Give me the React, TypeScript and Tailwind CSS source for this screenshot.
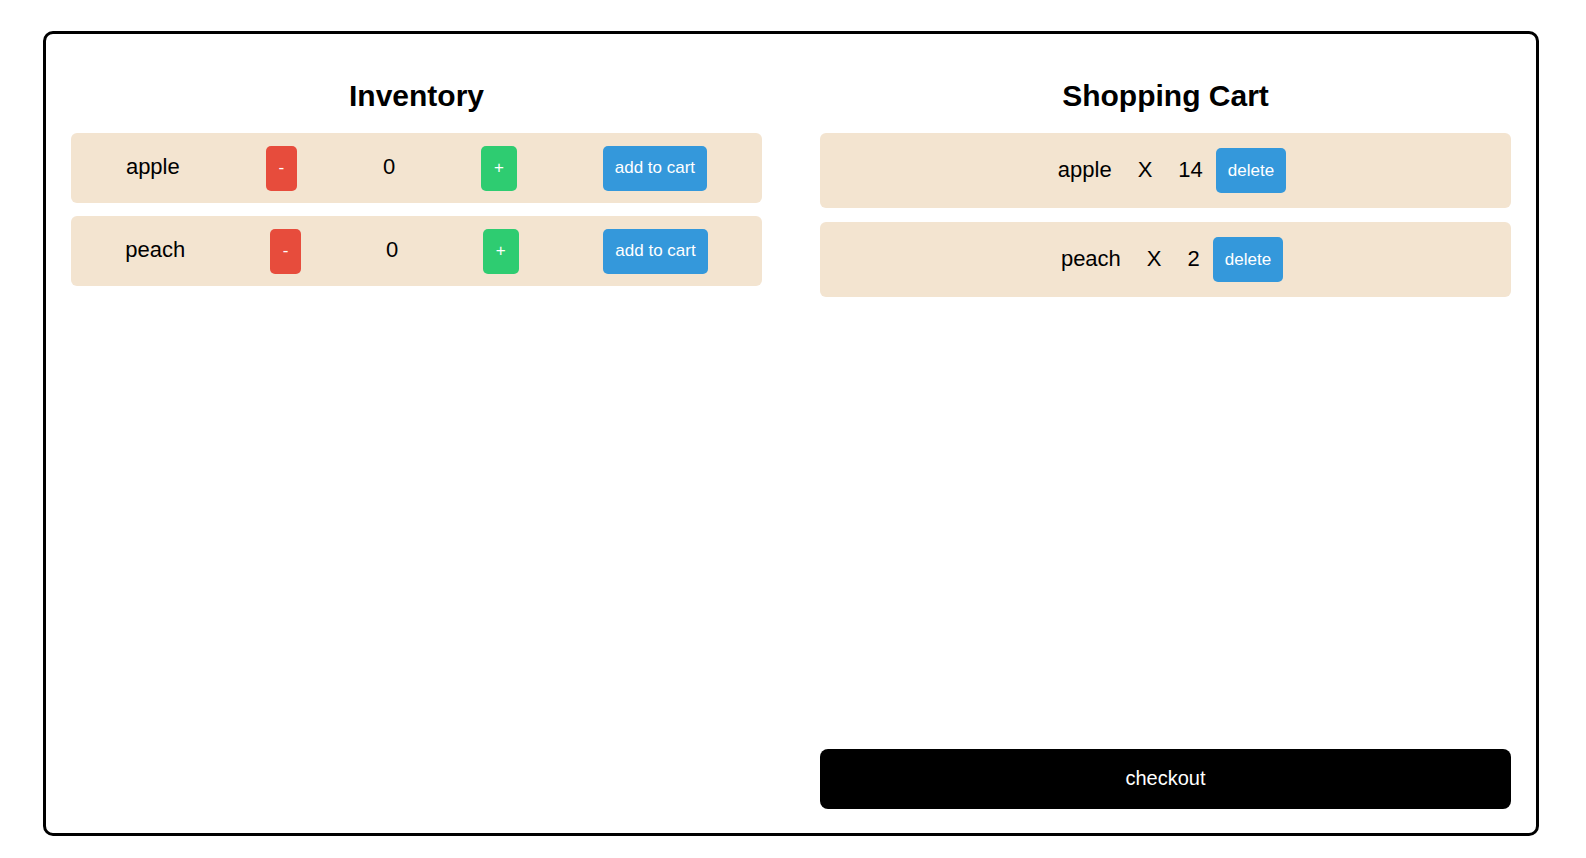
import React from "react";

const inventory = [
  { name: "apple", qty: 0 },
  { name: "peach", qty: 0 },
];

const cart = [
  { name: "apple", qty: 14 },
  { name: "peach", qty: 2 },
];

export default function App() {
  return (
    <div
      className="w-[1586px] h-[858px] bg-white text-black overflow-hidden"
      style={{ fontFamily: '"Liberation Sans", Arial, sans-serif' }}
    >
      <div className="ml-[43px] mt-[31px] w-[1496px] h-[805px] border-[3px] border-black rounded-[10px] flex gap-[58px] px-[25px] pt-[44px] pb-[24px]">
        {/* Inventory */}
        <div className="flex-1 flex flex-col">
          <h1 className="h-[36px] leading-[36px] text-[30px] font-bold text-center mb-[19px]">
            Inventory
          </h1>
          <div className="flex flex-col gap-[13px]">
            {inventory.map((item) => (
              <div
                key={item.name}
                className="h-[70px] bg-[#f3e4d0] rounded-[6px] flex items-center justify-around px-3"
              >
                <span className="text-[22px] pb-[3px]">{item.name}</span>
                <button className="h-[45px] px-[13px] bg-[#e74c3c] text-white text-[17px] rounded-[5px]">
                  -
                </button>
                <span className="text-[22px] pb-[3px]">{item.qty}</span>
                <button className="h-[45px] px-[13px] bg-[#2ecc71] text-white text-[17px] rounded-[5px]">
                  +
                </button>
                <button className="h-[45px] px-3 bg-[#3498db] text-white text-[17px] rounded-[5px]">
                  add to cart
                </button>
              </div>
            ))}
          </div>
        </div>

        {/* Shopping Cart */}
        <div className="flex-1 flex flex-col">
          <h1 className="h-[36px] leading-[36px] text-[30px] font-bold text-center mb-[19px]">
            Shopping Cart
          </h1>
          <div className="flex flex-col gap-[14px]">
            {cart.map((item) => (
              <div
                key={item.name}
                className="h-[75px] bg-[#f3e4d0] rounded-[6px] flex items-center justify-center"
              >
                <span className="text-[22px] mx-[13px] pb-[2px]">{item.name}</span>
                <span className="text-[22px] mx-[13px] pb-[2px]">X</span>
                <span className="text-[22px] mx-[13px] pb-[2px]">{item.qty}</span>
                <button className="h-[45px] px-3 bg-[#3498db] text-white text-[17px] rounded-[5px]">
                  delete
                </button>
              </div>
            ))}
          </div>
          <button className="mt-auto h-[60px] w-full bg-black text-white text-[20px] rounded-[8px] pb-[2px]">
            checkout
          </button>
        </div>
      </div>
    </div>
  );
}
